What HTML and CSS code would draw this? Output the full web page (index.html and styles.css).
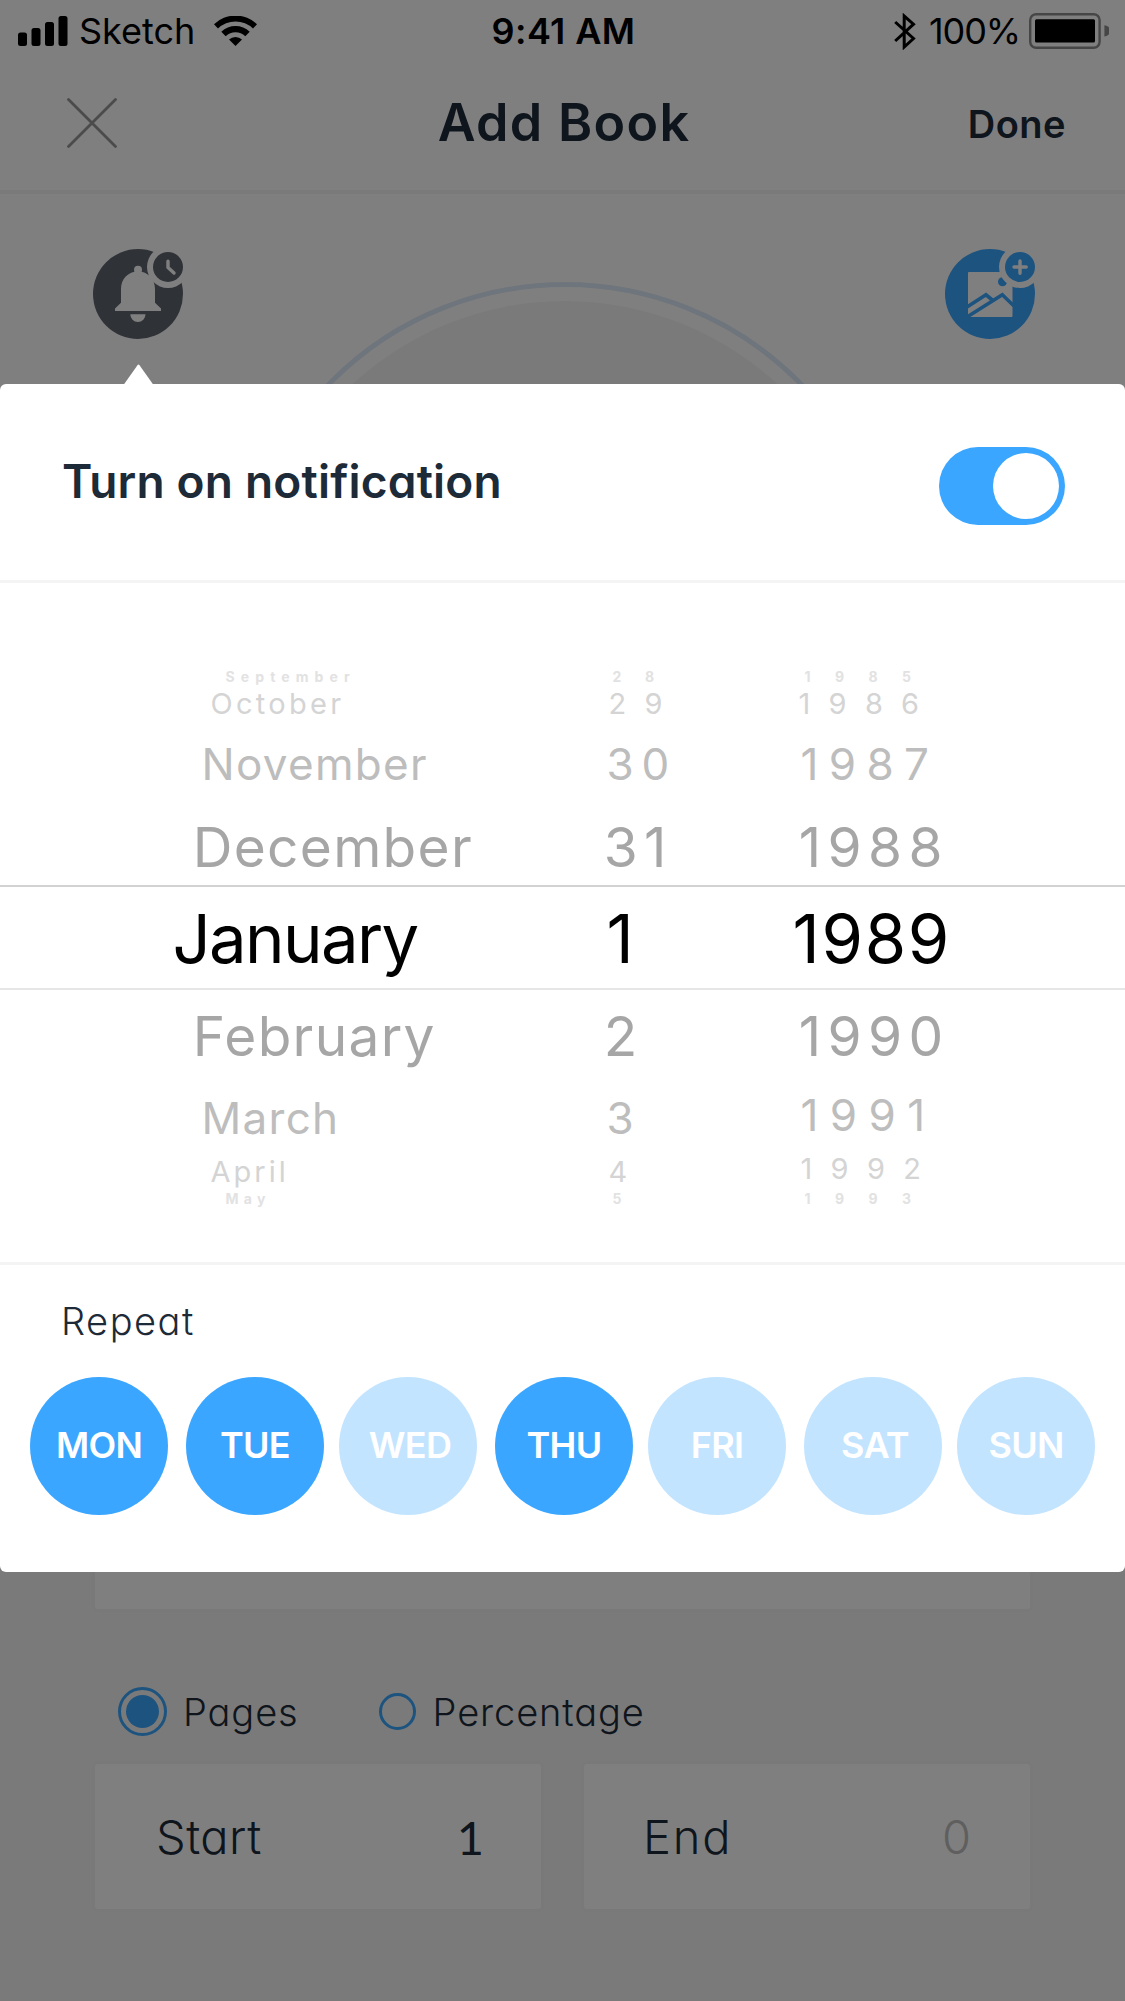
FILE: index.html
```html
<!DOCTYPE html>
<html lang="en">
<head>
    <meta charset="UTF-8">
    <meta name="viewport" content="width=device-width, initial-scale=1.0">
    <title>Add Book</title>
    <link rel="stylesheet" href="styles.css">
</head>
<body>
    <div class="screen">
        <div class="status-bar">
            <div class="status-left">
                <svg class="signal" width="50" height="30" viewBox="0 0 50 30">
                    <rect x="0" y="16.5" width="9" height="13.5" rx="2.5"/>
                    <rect x="13.5" y="12" width="9" height="18" rx="2.5"/>
                    <rect x="27" y="6" width="9" height="24" rx="2.5"/>
                    <rect x="40.5" y="0" width="9" height="30" rx="2.5"/>
                </svg>
                <span class="carrier">Sketch</span>
                <svg class="wifi" width="43" height="30" viewBox="0 0 43 30">
                    <path d="M0 8.2A31 31 0 0 1 43 8.2L39 12.6A25 25 0 0 0 4 12.6Z"/>
                    <path d="M7.3 15.8A20.5 20.5 0 0 1 35.7 15.8L31.3 20.2A14.2 14.2 0 0 0 11.7 20.2Z"/>
                    <path d="M15 23.5A9.5 9.5 0 0 1 28 23.5L21.5 30Z"/>
                </svg>
            </div>
            <span class="clock">9:41 AM</span>
            <div class="status-right">
                <svg class="bluetooth" width="22" height="37" viewBox="0 0 22 37">
                    <path d="M1.2 9L19.5 25.5L10.2 34V3L19.5 11.2L1.2 28"/>
                </svg>
                <span class="percent">100%</span>
                <svg class="battery" width="80" height="36" viewBox="0 0 80 36">
                    <rect class="battery-frame" x="1.2" y="1.2" width="69.4" height="33.6" rx="6"/>
                    <rect x="6" y="6.2" width="60" height="23.4" rx="1.5"/>
                    <path class="battery-cap" d="M75.4 12.2A5.6 5.6 0 0 1 75.4 23.4Z"/>
                </svg>
            </div>
        </div>

        <header class="header">
            <svg class="close" width="50" height="50" viewBox="0 0 50 50">
                <path d="M1.5 1.5L48.5 48.5M48.5 1.5L1.5 48.5"/>
            </svg>
            <h1 class="title">Add Book</h1>
            <span class="done">Done</span>
        </header>

        <section class="cover">
            <svg class="cover-icon" width="90" height="90" viewBox="0 0 90 90">
                <circle cx="45" cy="45" r="45" fill="#5e6670"/>
                <g fill="#fff">
                    <circle cx="45" cy="20.8" r="4"/>
                    <path d="M28 40C28 30 35 22.5 45 22.5S62 30 62 40V53.7L68 59.4V62H22V59.4L28 53.7Z"/>
                    <path d="M37.3 65.3H52.5A7.6 7.6 0 0 1 37.3 65.3Z"/>
                    <circle cx="75" cy="18" r="21"/>
                </g>
                <circle cx="75" cy="18" r="15" fill="#5e6670"/>
                <path class="badge-mark" d="M75 12.2V18.5L81 24"/>
            </svg>
            <svg class="cover-ring" width="664" height="664" viewBox="0 0 664 664">
                <circle cx="332" cy="332" r="329.5" fill="none" stroke="#dfebf9" stroke-width="5"/>
                <circle cx="332" cy="332" r="313" fill="#f4f4f4"/>
            </svg>
            <svg class="cover-icon" width="90" height="90" viewBox="0 0 90 90">
                <circle cx="45" cy="45" r="45" fill="#3aa6ff"/>
                <rect x="23" y="23" width="44.5" height="45" rx="1" fill="#fff"/>
                <circle cx="57.5" cy="32.7" r="4.5" fill="#3aa6ff"/>
                <path d="M22 58L41 45.8L47.3 51M22 68L57.3 45.8L69 57" fill="none" stroke="#3aa6ff" stroke-width="3.6"/>
                <circle cx="75" cy="18" r="21" fill="#fff"/>
                <circle cx="75" cy="18" r="15" fill="#3aa6ff"/>
                <path class="badge-mark" d="M75 12V24.2M69 18H81.2"/>
            </svg>
        </section>

        <section class="form">
            <div class="field field-wide"></div>
            <div class="units">
                <span class="radio radio-on"></span>
                <span class="unit">Pages</span>
                <span class="radio"></span>
                <span class="unit">Percentage</span>
            </div>
            <div class="range">
                <div class="field">
                    <span class="field-start">Start</span>
                    <span class="value-start">1</span>
                </div>
                <div class="field">
                    <span class="field-end">End</span>
                    <span class="value-end">0</span>
                </div>
            </div>
        </section>

        <div class="overlay"></div>

        <div class="popover">
            <svg class="arrow" width="31" height="21" viewBox="0 0 31 21">
                <path d="M0.5 21L14.5 1.2Q15.5 0 16.5 1.2L30.5 21Z"/>
            </svg>
            <div class="notify">
                <h2 class="notify-title">Turn on notification</h2>
                <div class="toggle"><div class="knob"></div></div>
            </div>
            <div class="picker">
                <div class="row row-4"><span>September</span><span class="num">28</span><span class="num">1985</span></div>
                <div class="row row-3"><span>October</span><span class="num">29</span><span class="num">1986</span></div>
                <div class="row row-2"><span>November</span><span class="num">30</span><span class="num">1987</span></div>
                <div class="row row-1"><span>December</span><span class="num">31</span><span class="num">1988</span></div>
                <div class="row selected"><span>January</span><span class="num">1</span><span class="num">1989</span></div>
                <div class="row row-1 below"><span>February</span><span class="num">2</span><span class="num">1990</span></div>
                <div class="row row-2 below"><span>March</span><span class="num">3</span><span class="num">1991</span></div>
                <div class="row row-3 below"><span>April</span><span class="num">4</span><span class="num">1992</span></div>
                <div class="row row-4 below"><span>May</span><span class="num">5</span><span class="num">1993</span></div>
            </div>
            <div class="repeat">
                <p class="repeat-label">Repeat</p>
                <div class="days">
                    <span class="day on">MON</span>
                    <span class="day on">TUE</span>
                    <span class="day nudge">WED</span>
                    <span class="day on">THU</span>
                    <span class="day">FRI</span>
                    <span class="day nudge">SAT</span>
                    <span class="day">SUN</span>
                </div>
            </div>
        </div>
    </div>
</body>
</html>
```
FILE: styles.css
```css
* {
    box-sizing: border-box;
}
body {
    margin: 0;
    font-family: Inter, "Liberation Sans", sans-serif;
    color: #1d2a38;
    background-color: #f5f5f5;
}
h1, h2, p {
    margin: 0;
}
svg {
    display: block;
    flex: none;
}
.screen {
    position: relative;
    width: 1125px;
    height: 2001px;
    overflow: hidden;
}

/* status bar */
.status-bar {
    display: grid;
    grid-template-columns: 1fr auto 1fr;
    height: 62px;
    padding: 0 16px 0 18px;
    background-color: #fff;
    color: #000;
    font-size: 36px;
    line-height: 62px;
}
.status-left, .status-right {
    display: flex;
    align-items: center;
}
.status-right {
    justify-content: flex-end;
}
.carrier {
    margin-left: 11px;
    letter-spacing: 0;
}
.wifi {
    margin-left: 19px;
}
.clock {
    font-weight: 600;
    letter-spacing: 0.4px;
}
.bluetooth path {
    fill: none;
    stroke: #000;
    stroke-width: 3;
}
.percent {
    margin: 0 9px 0 13px;
    letter-spacing: -1.1px;
}
.battery-frame {
    fill: none;
    stroke: #8c8c8c;
    stroke-width: 2.4;
}
.battery-cap {
    fill: #8c8c8c;
}

/* header */
.header {
    display: grid;
    grid-template-columns: 1fr auto 1fr;
    align-items: center;
    height: 132px;
    padding: 0 59px 7px 67px;
    background-color: #fff;
    border-bottom: 4px solid #f4f4f4;
}
.close path {
    fill: none;
    stroke: #969696;
    stroke-width: 2.8;
    stroke-linecap: round;
}
.title {
    padding-right: 5px;
    font-size: 52px;
    font-weight: 600;
    letter-spacing: 1.3px;
    line-height: 64px;
}
.done {
    justify-self: end;
    padding-top: 3px;
    font-size: 38px;
    font-weight: 600;
    letter-spacing: 0.5px;
}

.cover {
    display: flex;
    justify-content: space-between;
    height: 1006px;
    padding: 55px 90px 0 93px;
    background-color: #fff;
}
.cover-icon {
    overflow: visible;
}
.cover-ring {
    margin: 33px 0 0 2px;
}
.badge-mark {
    fill: none;
    stroke: #fff;
    stroke-width: 3.4;
    stroke-linecap: round;
    stroke-linejoin: round;
}

/* form */
.form {
    padding: 264px 95px 0;
    font-weight: 300;
    font-feature-settings: "cv11";
}
.field {
    display: flex;
    align-items: center;
    justify-content: space-between;
    height: 145px;
    padding: 0 59px 0 61px;
    background-color: #fff;
    border-radius: 3px;
    box-shadow: 0 0 0 3px #f2f2f2;
    font-size: 47px;
}
.units {
    display: flex;
    align-items: center;
    height: 155px;
    padding: 50px 0 0 23px;
    font-size: 38px;
}
.radio {
    width: 37px;
    height: 37px;
    border: 3px solid #3aa6ff;
    border-radius: 50%;
    margin: 0 17px 0 80px;
}
.radio-on {
    width: 49px;
    height: 49px;
    margin: 0 16px 0 0;
    padding: 5px;
    background: #3aa6ff content-box;
}
.unit {
    letter-spacing: 0.9px;
}
.range {
    display: grid;
    grid-template-columns: 1fr 1fr;
    gap: 43px;
}
.field-start {
    letter-spacing: 0.5px;
}
.field-end {
    margin-left: -2px;
    letter-spacing: 1.8px;
}
.value-start {
    margin-right: -2px;
    font-family: Lato, sans-serif;
    font-weight: 400;
}
.value-end {
    color: #bebebe;
}

.overlay {
    position: absolute;
    inset: 0;
    background-color: rgba(0, 0, 0, 0.5);
}

/* popover */
.popover {
    position: absolute;
    top: 384px;
    left: 0;
    width: 1125px;
    height: 1188px;
    background-color: #fff;
    border-radius: 6px;
}
.arrow {
    position: absolute;
    top: -20px;
    left: 122.5px;
    fill: #fff;
}
.notify {
    display: flex;
    align-items: center;
    justify-content: space-between;
    height: 199px;
    padding: 7px 60px 0 62px;
    border-bottom: 3px solid #f4f4f4;
}
.notify-title {
    padding-bottom: 9px;
    font-size: 46px;
    font-weight: 600;
    letter-spacing: 0.2px;
    font-feature-settings: "cv11";
}
.toggle {
    display: flex;
    justify-content: flex-end;
    width: 126px;
    height: 78px;
    padding: 6px;
    background-color: #3aa6ff;
    border-radius: 39px;
}
.knob {
    width: 66px;
    height: 66px;
    background-color: #fff;
    border-radius: 50%;
}

.picker {
    height: 682px;
    padding-top: 80px;
    border-bottom: 3px solid #f4f4f4;
}
.row {
    display: grid;
    white-space: nowrap;
}
.row-4 {
    grid-template-columns: 387px 192px 1fr;
    height: 26px;
    padding-left: 225.5px;
    font-size: 14px;
    font-weight: 700;
    line-height: 27px;
    letter-spacing: 6.1px;
    color: #e2e2e2;
}
.row-4 .num {
    letter-spacing: 24.4px;
}
.row-4 .num:nth-child(2) {
    letter-spacing: 23.7px;
}
.row-4.below {
    height: 20px;
    line-height: 21px;
    letter-spacing: 5.3px;
}
.row-3 {
    grid-template-columns: 398px 190px 1fr;
    height: 29px;
    padding-left: 210.5px;
    font-size: 29px;
    line-height: 29px;
    letter-spacing: 3.3px;
    color: #d4d4d4;
}
.row-3 .num {
    letter-spacing: 18.3px;
}
.row-3.below {
    grid-template-columns: 398px 192px 1fr;
    height: 34px;
    line-height: 35px;
    letter-spacing: 3px;
}
.row-3.below .num {
    letter-spacing: 18.3px;
}
.row-2 {
    grid-template-columns: 405px 194px 1fr;
    height: 92px;
    padding-left: 201.5px;
    font-size: 44px;
    line-height: 92px;
    letter-spacing: 1.3px;
    color: #bdbdbd;
}
.row-2 .num {
    letter-spacing: 10.4px;
}
.row-2 .num:nth-child(2) {
    letter-spacing: 7.8px;
}
.row-2.below {
    height: 72px;
    line-height: 72px;
}
.row-2.below .num:last-child {
    margin-top: -3px;
    letter-spacing: 11.4px;
}
.row-3.below .num:last-child {
    margin-top: -3px;
}
.row-1 {
    grid-template-columns: 411px 195px 1fr;
    height: 75px;
    padding-left: 192.7px;
    font-size: 55px;
    line-height: 74px;
    letter-spacing: 1.3px;
    color: #a6a6a6;
}
.row-1 .num {
    letter-spacing: 6.4px;
}
.row-1.below {
    height: 92px;
    line-height: 92px;
}
.selected {
    grid-template-columns: 434px 186px 1fr;
    height: 105px;
    padding: 1px 0 0 172.5px;
    border-top: 2px solid #d2d2d2;
    border-bottom: 2px solid #e6e6e6;
    font-size: 67px;
    line-height: 101px;
    letter-spacing: -1.66px;
    color: #000;
}
.selected .num {
    letter-spacing: 1.7px;
}

.repeat {
    padding: 32px 30px 0;
}
.repeat-label {
    padding-left: 31px;
    font-size: 38px;
    font-weight: 300;
    line-height: 48px;
    letter-spacing: 1.5px;
    font-feature-settings: "cv11";
}
.days {
    display: flex;
    gap: 15px;
    margin-top: 32px;
}
.day {
    width: 138px;
    height: 138px;
    border-radius: 50%;
    background-color: #c3e4ff;
    color: #fff;
    font-size: 36px;
    font-weight: 600;
    line-height: 136px;
    letter-spacing: -0.7px;
    text-align: center;
}
.day:nth-child(odd):not(:last-child) {
    margin-right: 3px;
}
.day.nudge {
    padding-left: 4px;
}
.day.on {
    background-color: #3aa6ff;
}
```
